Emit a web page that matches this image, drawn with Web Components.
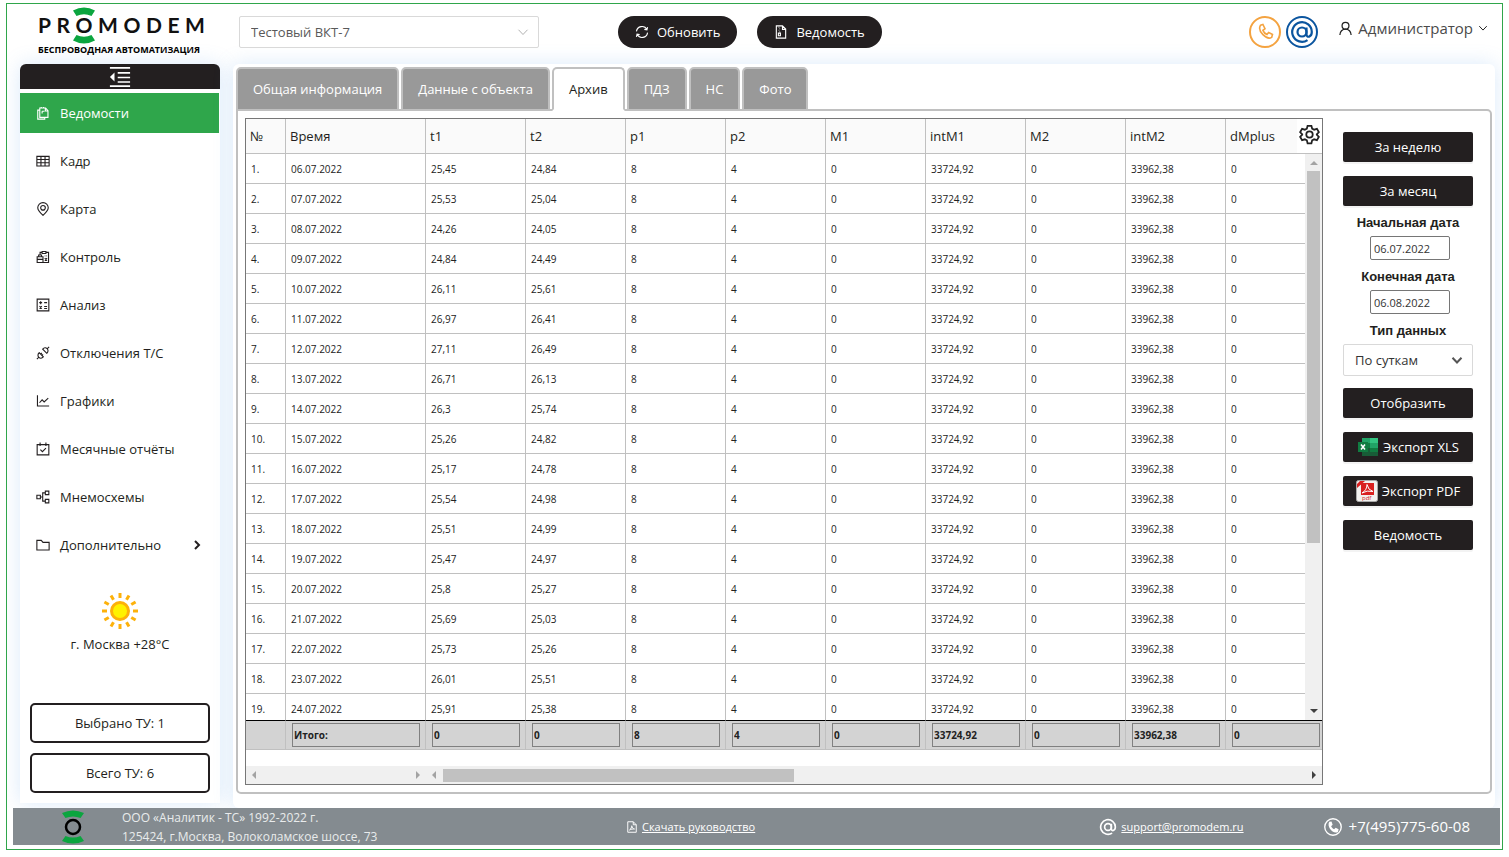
<!DOCTYPE html>
<html lang="ru">
<head>
<meta charset="utf-8">
<title>PROMODEM — Архив</title>
<style>
  html { height: 100%; }
  body {
    margin: 0; min-height: 100vh; display: flex; background: #fff;
    font-family: "Open Sans", "Noto Sans", sans-serif; font-size: 13px; color: #231f20;
    --ink: #231f20; --green: #2fa64b; --line: #c0c0c0; --glow: 0 0 20px rgba(90, 160, 230, .22);
  }
  pm-app { flex: 1; }
</style>
</head>
<body>
<pm-app></pm-app>
<script>
const ICONS = {
  copy: '<path d="M6 7H3V22.500H15V20M6.500 3.500V19.500H20.500V8L16.500 3.500ZM16 4V8.500H20M9 1.500V3.500M13 1.500V3.500M10.500 9H14.500M10.500 9V13"/>',
  table: '<path d="M1.500 4H22.500V20.500H1.500ZM1.500 9.500H22.500M1.500 15H22.500M8.500 4V20.500M15.500 4V20.500"/>',
  pin: '<path d="M12 23C7 18.500 3 14.500 3 10A9 9 0 0 1 21 10C21 14.500 17 18.500 12 23Z"/><circle cx="12" cy="10" r="4"/>',
  control: '<path d="M7 9V4H11M17 4H21.500V21.500H12M10.500 2.500H17V6H10.500ZM2 11.500H12V21.500H2ZM4.500 11.500V8.500H9.500V11.500M2 16H12M15 10H16M18 10H19M15 14L19 18M19 14L15 18"/>',
  calc: '<path d="M2 2H22V22H2ZM5.500 8H10.500M8 5.500V10.500M14 8H19M6 14L10 18M10 14L6 18M14 14.500H19M14 18H19"/>',
  plug: '<path d="M1.500 22.500L5 19M22.500 1.500L19 5M9.500 17L12 14.500M7.500 14.500L10 12M5.500 11.500L12.500 18.500C10 21.500 7 21.500 5 19.500S2.500 14 5.500 11.500ZM11.500 5.500C14 2.500 17 2.500 19 4.500S21.500 10 18.500 12.500Z"/>',
  chart: '<path d="M2.500 2V20.500H22.500M6 15L10.500 10L14 13.500L21 7"/>',
  calendar: '<path d="M2 4.500H22V22H2ZM7 1V7M17 1V7M7.500 13L11 16.500L17 10.500"/>',
  scheme: '<path d="M1.500 9H7.500V15H1.500ZM16 2H22V8H16ZM16 16H22V22H16ZM7.500 12H11.500M16 5H11.500V19H16"/>',
  folder: '<path d="M1.500 4H9L12 7.500H22.500V20.500H1.500Z"/>',
  refresh: '<path d="M2.500 11A9.500 9.500 0 0 1 20.500 8M21.500 13A9.500 9.500 0 0 1 3.500 16M21.500 3.500L20.500 8.500L16 7.500M2.500 20.500L3.500 15.500L8 16.500"/>',
  report: '<path d="M4 1.500H14.500L20 7V22.500H4ZM14.500 1.500V7.500H20M8 4H9M9.500 6.500H10.500M8 9H9M9.500 11.500H10.500M7.500 14H11V18.500H7.500Z"/>',
  user: '<circle cx="12" cy="7.500" r="5.500"/><path d="M3 22.500C3 17 7 13 12 13S21 17 21 22.500"/>',
  down: '<path d="M3 7.500L12 17L21 7.500"/>',
  right: '<path d="M8 4L16 12L8 20"/>',
  gear: '<path d="M9.800 2H14.200L15 5.200L17.300 6.500L20.500 5.600L22.700 9.400L20.300 11.800V12.200L22.700 14.600L20.500 18.400L17.300 17.500L15 18.800L14.200 22H9.800L9 18.800L6.700 17.500L3.500 18.400L1.300 14.600L3.700 12.200V11.800L1.300 9.400L3.500 5.600L6.700 6.500L9 5.200Z"/><circle cx="12" cy="12" r="3.700"/>',
  pdfdoc: '<path d="M3.500 1.500H14.500L20.500 7.500V22.500H3.500ZM14.500 1.500V7.500H20.500M7 18C10 16 11.500 12 11.500 9.500C12 13 14 15.500 17 16C13.500 15.500 10 16.500 7 18Z"/>',
  at: '<circle cx="12" cy="12" r="4.500"/><path d="M16.500 7.500V14.200C16.500 18.500 21.800 17 21.800 12A9.800 9.800 0 1 0 17.500 20.100"/>',
  phone: '<path d="M6.500 4L9.500 3L12 8L9.500 10C10.500 12.500 12 14 14.300 15L16.300 12.500L21 15L20 18.500C14 22 2.500 11 6.500 4Z"/>',
  collapse: '<path d="M1 2H23M9.500 7.500H23M9.500 12.500H23M9.500 17.500H23M1 22H23"/><path d="M6 7L1 12L6 17Z" fill="currentColor" stroke="none"/>'
};

/* Registers an element whose open shadow root is cloned from a template. */
function define(name, css, html, setup) {
  const t = document.createElement('template');
  t.innerHTML = '<style>*{box-sizing:border-box}' + css + '</style>' + html;
  customElements.define(name, class extends HTMLElement {
    constructor() {
      super();
      this.attachShadow({ mode: 'open' }).append(t.content.cloneNode(true));
    }
    connectedCallback() {
      if (setup && !this.ready) { this.ready = true; setup(this, this.shadowRoot); }
    }
  });
}

define('pm-icon',
  ':host{display:inline-flex;flex:none;width:var(--size,14px);height:var(--size,14px)}svg{width:100%;height:100%;fill:none;stroke:currentColor;stroke-width:var(--stroke,1.9)}',
  '<svg viewBox="0 0 24 24" aria-hidden="true"></svg>',
  (el, r) => { r.querySelector('svg').innerHTML = ICONS[el.getAttribute('name')] || ''; });

define('pm-logo',
  `:host{display:block;width:167px;color:#111}
   .word{display:flex;justify-content:space-between;font:700 21px/24px Lato,sans-serif}
   .o{position:relative}
   svg{position:absolute;left:50%;top:-6px;margin-left:-12px;width:24px;height:37px;fill:#0ba53f}
   .sub{font:700 9px/12px "Open Sans",sans-serif;color:#000;margin-top:7px;white-space:nowrap}`,
  `<div class="word"><span>P</span><span>R</span><span class="o">O<svg viewBox="0 0 24 37"><path d="M1 3.500Q12-2.500 23 3.500L19.500 9Q12 5.500 4.500 9ZM1 33.500Q12 39.500 23 33.500L19.500 28Q12 31.500 4.500 28Z"/></svg></span><span>M</span><span>O</span><span>D</span><span>E</span><span>M</span></div>
   <div class="sub">БЕСПРОВОДНАЯ АВТОМАТИЗАЦИЯ</div>`);

define('pm-pill',
  `:host{display:block}
   button{display:flex;align-items:center;gap:8px;height:32px;padding:0 17px;border:0;border-radius:16px;background:var(--ink);color:#fff;font:500 13px "Open Sans",sans-serif}`,
  '<button type="button"><pm-icon></pm-icon><slot></slot></button>',
  (el, r) => {
    const i = document.createElement('pm-icon');
    i.setAttribute('name', el.getAttribute('icon'));
    r.querySelector('pm-icon').replaceWith(i);
  });

define('pm-select',
  `:host{display:grid;align-items:center}
   select,pm-icon{grid-area:1/1}
   select{width:100%;height:32px;appearance:none;border:1px solid #d9d9d9;border-radius:2px;background:#fff;color:inherit;font:13px "Open Sans",sans-serif;padding:0 11px}
   pm-icon{justify-self:end;margin-right:10px;pointer-events:none;color:var(--arrow,#555)}`,
  '<select></select><pm-icon name="down"></pm-icon>',
  (el, r) => {
    const s = r.querySelector('select');
    s.add(new Option(el.getAttribute('value')));
    s.setAttribute('aria-label', el.getAttribute('label'));
  });

define('pm-header',
  `:host{display:flex;align-items:flex-start;height:60px;padding:12px 14px 0 31px}
   pm-logo{margin:-3px 34px 0 0}
   .object{width:300px;color:#595959;margin-right:79px;--size:12px;--stroke:1.8;--arrow:#a8a8a8}
   pm-pill + pm-pill{margin-left:20px}
   .contacts{display:flex;gap:5px;margin-left:auto}
   .contacts a{display:grid;place-items:center;width:32px;height:32px;border:2px solid;border-radius:50%}
   .phone{color:#f4a340;--size:20px}.mail{color:#0b559f;--size:24px;--stroke:2.2}
   .user{display:flex;align-items:center;gap:5px;margin:0 0 0 20px;padding:0;border:0;background:none;height:24px;color:#4a4a4a;font:15px "Open Sans",sans-serif;--size:15px;--stroke:2}
   .user .arrow{--size:10px;--stroke:2.4}
   .user pm-icon{color:#222}`,
  `<pm-logo></pm-logo>
   <pm-select class="object" label="Объект" value="Тестовый ВКТ-7"></pm-select>
   <pm-pill icon="refresh">Обновить</pm-pill><pm-pill icon="report">Ведомость</pm-pill>
   <div class="contacts"><a class="phone" href="#phone" aria-label="Телефон"><pm-icon name="phone"></pm-icon></a><a class="mail" href="#mail" aria-label="Почта"><pm-icon name="at"></pm-icon></a></div>
   <button class="user" type="button"><pm-icon name="user"></pm-icon>Администратор<pm-icon class="arrow" name="down"></pm-icon></button>`);

define('pm-nav-item',
  `:host{display:block}
   a{display:flex;align-items:center;gap:10px;height:40px;padding:0 16px;color:inherit;text-decoration:none}
   :host([active]) a{background:var(--green);color:#fff}
   .more{margin-left:auto;--size:12px;--stroke:4}`,
  '<a href="#"><slot name="icon"></slot><slot></slot></a>',
  (el, r) => {
    if (el.hasAttribute('active')) r.querySelector('a').setAttribute('aria-current', 'page');
    if (el.hasAttribute('more')) {
      const m = document.createElement('pm-icon');
      m.className = 'more'; m.setAttribute('name', 'right');
      r.querySelector('a').append(m);
    }
  });

define('pm-sidebar',
  `:host{display:flex;flex-direction:column;width:200px;flex:none;background:#fff;box-shadow:var(--glow);border-radius:6px 6px 0 0}
   .fold{display:grid;place-items:center;height:25px;border:0;border-radius:6px 6px 0 0;background:var(--ink);color:#fff;--size:22px;--stroke:1.8;padding:0}
   nav{display:flex;flex-direction:column;gap:8px;margin:4px 1px 0 0}
   .weather{display:flex;flex-direction:column;align-items:center;gap:5px;margin-top:27px;line-height:18px}
   .weather svg{width:38px;height:38px}
   .totals{display:flex;flex-direction:column;gap:10px;margin-top:auto;padding:16px 10px 10px}
   .totals button{height:40px;border:2px solid var(--ink);border-radius:5px;background:#fff;color:var(--ink);font:13px "Open Sans",sans-serif}`,
  `<button class="fold" type="button" aria-label="Свернуть меню"><pm-icon name="collapse"></pm-icon></button>
   <nav></nav>
   <div class="weather"><svg viewBox="-19 -19 38 38" aria-hidden="true"><g id="rays" stroke="#fdb10a" stroke-width="3"></g><circle r="8.500" fill="#fff200" stroke="#fdb10a" stroke-width="3"/></svg><span>г. Москва +28°C</span></div>
   <div class="totals"><button type="button">Выбрано ТУ: 1</button><button type="button">Всего ТУ: 6</button></div>`,
  (el, r) => {
    r.querySelector('nav').innerHTML = [['copy', 'Ведомости', 'active'], ['table', 'Кадр'], ['pin', 'Карта'], ['control', 'Контроль'], ['calc', 'Анализ'],
      ['plug', 'Отключения Т/С'], ['chart', 'Графики'], ['calendar', 'Месячные отчёты'], ['scheme', 'Мнемосхемы'], ['folder', 'Дополнительно', 'more']]
      .map(([i, t, a = '']) => `<pm-nav-item ${a}><pm-icon slot="icon" name="${i}"></pm-icon>${t}</pm-nav-item>`).join('');
    r.querySelector('#rays').innerHTML = Array.from({ length: 12 }, (_, i) => `<path d="M0-13V-18" transform="rotate(${i * 30})"/>`).join('');
  });

define('pm-tabs',
  `:host{display:flex;gap:2px;margin-bottom:-2px;position:relative}
   button{height:44px;padding:0 15px;border:2px solid var(--line);border-radius:5px 5px 0 0;background:#999;color:#fff;font:500 13px "Open Sans",sans-serif}
   button[aria-selected=true]{background:#fff;border-bottom-color:#fff;color:var(--ink);font-weight:400}`,
  '',
  (el, r) => {
    el.setAttribute('role', 'tablist');
    for (const t of ['Общая информация', 'Данные с объекта', 'Архив', 'ПДЗ', 'НС', 'Фото']) {
      const b = document.createElement('button');
      b.type = 'button'; b.textContent = t; b.setAttribute('role', 'tab');
      b.setAttribute('aria-selected', t === 'Архив');
      r.append(b);
    }
  });

define('pm-archive',
  `:host{display:grid;grid-template-rows:minmax(0,1fr) 16px 18px;min-width:0;border:1px solid #777;background:#fff}
   .view,.vbar,.gear{grid-area:1/1}
   .view{overflow:hidden;height:0;min-height:100%}
   table{border-collapse:separate;border-spacing:0;table-layout:fixed;width:1080px}
   th,td{text-align:left;border:0 solid var(--line);border-width:0 1px 1px 0;padding:0 5px;white-space:nowrap;font-weight:400}
   thead th{position:sticky;top:0;height:35px;background:#fafafa;padding:0 4px;font-size:13px}
   tbody td{height:30px;font-size:10px;color:#222}
   tfoot td{position:sticky;bottom:0;height:30px;background:#d3d3d3;border-top:1px solid #000;padding:0 5px 0 6px}
   input{display:block;width:100%;height:24px;padding:0 1px;border:1px solid #808080;border-radius:0;background:#d3d3d3;color:#222;font:700 10px "Open Sans",sans-serif}
   .gear{justify-self:end;align-self:start;width:25px;height:34px;z-index:2;position:relative;border:0;padding:0 0 4px;background:#fff;display:grid;place-items:center;--size:21px;--stroke:2;color:#222}
   .vbar{justify-self:end;position:relative;z-index:1;width:17px;margin:35px 0 30px;background:#f0f0f0;display:grid;grid-template-rows:17px 373fr 177fr}
   .vbar i,.hbar i{background:#c1c1c1}
   .vbar i{margin:0 2px}
   .hbar{grid-row:3;display:flex;background:#f0f0f0;align-items:center}
   svg{width:8px;height:8px;fill:#a3a3a3;place-self:center;flex:none}
   svg.on{fill:#404040}
   .vbar .on{align-self:end;margin-bottom:5px}
   .hbar .a{width:180px;display:flex;justify-content:space-between;padding:0 4px}
   .hbar .b{flex:1;display:grid;grid-template-columns:8px 5px 351fr 516fr 8px;align-items:center;padding:0 4px}
   .hbar i{grid-column:3;height:13px}
   .hbar .on{grid-column:5}`,
  `<div class="view"><table><colgroup></colgroup><thead><tr></tr></thead><tbody></tbody><tfoot><tr></tr></tfoot></table></div>
   <button class="gear" type="button" aria-label="Настройки"><pm-icon name="gear"></pm-icon></button>
   <div class="vbar"><svg viewBox="0 0 8 8"><path d="M0 6L4 2L8 6Z"/></svg><i></i><svg class="on" viewBox="0 0 8 8"><path d="M0 2L4 6L8 2Z"/></svg></div>
   <div class="hbar"><div class="a"><svg viewBox="0 0 8 8"><path d="M6 0L2 4L6 8Z"/></svg><svg viewBox="0 0 8 8"><path d="M2 0L6 4L2 8Z"/></svg></div><div class="b"><svg viewBox="0 0 8 8"><path d="M6 0L2 4L6 8Z"/></svg><i></i><svg class="on" viewBox="0 0 8 8"><path d="M2 0L6 4L2 8Z"/></svg></div></div>`,
  (el, r) => {
    const $ = s => r.querySelector(s);
    const heads = ['№', 'Время', 't1', 't2', 'p1', 'p2', 'M1', 'intM1', 'M2', 'intM2', 'dMplus'];
    const temps = [['25,45', '24,84'], ['25,53', '25,04'], ['24,26', '24,05'], ['24,84', '24,49'], ['26,11', '25,61'], ['26,97', '26,41'], ['27,11', '26,49'],
      ['26,71', '26,13'], ['26,3', '25,74'], ['25,26', '24,82'], ['25,17', '24,78'], ['25,54', '24,98'], ['25,51', '24,99'], ['25,47', '24,97'],
      ['25,8', '25,27'], ['25,69', '25,03'], ['25,73', '25,26'], ['26,01', '25,51'], ['25,91', '25,38']];
    const rest = ['8', '4', '0', '33724,92', '0', '33962,38', '0'];
    $('colgroup').innerHTML = heads.map((_, i) => `<col style="width:${i === 0 ? 40 : i === 1 ? 140 : 100}px">`).join('');
    $('thead tr').innerHTML = heads.map(h => `<th scope="col">${h}</th>`).join('');
    $('tbody').innerHTML = temps.map((t, i) => '<tr>' + [`${i + 1}.`, `${String(i + 6).padStart(2, '0')}.07.2022`, ...t, ...rest].map(v => `<td>${v}</td>`).join('') + '</tr>').join('');
    $('tfoot tr').innerHTML = '<td></td>' + ['Итого:', '0', '0', ...rest].map((v, i) => `<td><input readonly aria-label="Итог ${heads[i + 1]}" value="${v}"></td>`).join('');
  });

define('pm-action',
  `:host{display:block}
   button{display:flex;align-items:center;justify-content:center;gap:4px;width:100%;height:30px;padding:0;border:0;border-radius:2px;background:var(--ink);color:#fff;font:13px "Open Sans",sans-serif;box-shadow:0 2px 0 #f3f3f3}`,
  '<button type="button"><slot name="icon"></slot><slot></slot></button>');

define('pm-controls',
  `:host{display:flex;flex-direction:column;gap:14px;width:130px;flex:none}
   .fields{display:flex;flex-direction:column;align-items:center;margin:-5px 0 -2px}
   label,.label{font:700 13px/16px "Liberation Sans",sans-serif;margin:0 0 5px}
   input{width:80px;height:24px;margin:0 0 9px 4px;border:1px solid #767676;border-radius:2px;padding:0 3px;background:#fff;color:#333;font:11px "Open Sans",sans-serif}
   pm-select{width:100%;color:#333;--size:12px;--stroke:4}
   svg{width:22px;height:22px}`,
  `<pm-action>За неделю</pm-action><pm-action>За месяц</pm-action>
   <div class="fields"><label for="from">Начальная дата</label><input id="from" value="06.07.2022">
   <label for="to">Конечная дата</label><input id="to" value="06.08.2022">
   <span class="label">Тип данных</span><pm-select label="Тип данных" value="По суткам"></pm-select></div>
   <pm-action>Отобразить</pm-action>
   <pm-action><svg slot="icon" viewBox="0 0 22 22" aria-hidden="true"><path fill="#185c37" d="M5 2H21V20H5Z"/><path fill="#21a366" d="M5 2H13V7H5Z"/><path fill="#33c481" d="M13 2H21V7H13Z"/><path fill="#107c41" d="M5 7H13V12H5Z"/><path fill="#21a366" d="M13 7H21V12H13Z"/><path fill="#107c41" d="M13 12H21V16H13ZM1 6H11V16H1Z"/><path stroke="#fff" stroke-width="1.500" d="M4 8.500L8 13.500M8 8.500L4 13.500"/></svg>Экспорт XLS</pm-action>
   <pm-action><svg slot="icon" viewBox="0 0 22 22" aria-hidden="true"><rect x=".5" y=".5" width="21" height="21" rx="2" fill="#f2f0ee" stroke="#aaa"/><path fill="#d9201f" d="M5 3H18V15H5ZM1 8V4L4 1H9Z"/><path fill="none" stroke="#fff" d="M6 13Q11 10 11 4.500Q12 10 17 11.500Q11 10 6 13"/><text x="6" y="20" font-family="Open Sans" font-size="6" fill="#c22">pdf</text></svg>Экспорт PDF</pm-action>
   <pm-action>Ведомость</pm-action>`);

define('pm-footer',
  `:host{display:flex;align-items:center;height:37px;background:#848b90;color:#fff;margin:0 2px 4px 6px;font-size:12px;line-height:19px}
   .mark{width:24px;height:34px;margin-left:48px}
   address{font-style:normal;width:541px;padding-left:37px;color:#e9ebec;white-space:nowrap}
   a{display:flex;align-items:center;gap:4px;color:inherit;font-size:11px}
   .mail{margin-left:auto;--size:18px;--stroke:2.2}
   .manual{--size:12px}
   .tel{margin:0 30px 0 80px;font-size:15px;text-decoration:none;gap:7px}
   .tel svg{width:18px;height:18px}`,
  `<svg class="mark" viewBox="0 0 24 34" aria-hidden="true"><path fill="#0ba53f" d="M1 3Q12-2 23 3L19.500 8Q12 5 4.500 8ZM1 31Q12 36 23 31L19.500 26Q12 29 4.500 26Z"/><circle cx="12" cy="17" r="7" fill="none" stroke="#000" stroke-width="2.500"/></svg>
   <address>ООО «Аналитик - ТС» 1992-2022 г.<br>125424, г.Москва, Волоколамское шоссе, 73</address>
   <a class="manual" href="#manual"><pm-icon name="pdfdoc"></pm-icon><span>Скачать руководство</span></a>
   <a class="mail" href="mailto:support@promodem.ru"><pm-icon name="at"></pm-icon><span>support@promodem.ru</span></a>
   <a class="tel" href="tel:+74957756008"><svg viewBox="0 0 24 24" aria-hidden="true"><circle cx="12" cy="12" r="11" fill="none" stroke="#fff" stroke-width="1.800"/><path fill="#fff" d="M7 5L10 4.500L11.500 9L9.500 11C10.500 13 11.500 14 13.500 15L15.500 13L19.500 15L18.500 18.500C12.500 22 3 12 7 5Z"/></svg>+7(495)775-60-08</a>`);

define('pm-app',
  `:host{display:flex;flex-direction:column;margin:3px 6px 7px;border:1px solid #2fa64b}
   .main{flex:1;display:flex;gap:13px;padding:20px 7px 0 13px;margin-top:-20px;overflow:hidden;position:relative}
   pm-header{position:relative;z-index:1}
   pm-sidebar{margin-bottom:5px}
   .page{flex:1;min-width:0;display:flex;flex-direction:column;background:#fff;padding:3px 3px 14px;border-radius:6px;box-shadow:var(--glow)}
   .panel{flex:1;display:flex;gap:20px;border:2px solid var(--line);border-radius:0 5px 5px 5px;padding:7px 17px 7px 7px}
   pm-archive{flex:1}
   pm-controls{margin-top:14px}
   pm-tabs{z-index:1}`,
  `<pm-header></pm-header>
   <div class="main"><pm-sidebar></pm-sidebar>
     <main class="page"><pm-tabs></pm-tabs><section class="panel"><pm-archive></pm-archive><pm-controls></pm-controls></section></main>
   </div>
   <pm-footer></pm-footer>`);
</script>
</body>
</html>
